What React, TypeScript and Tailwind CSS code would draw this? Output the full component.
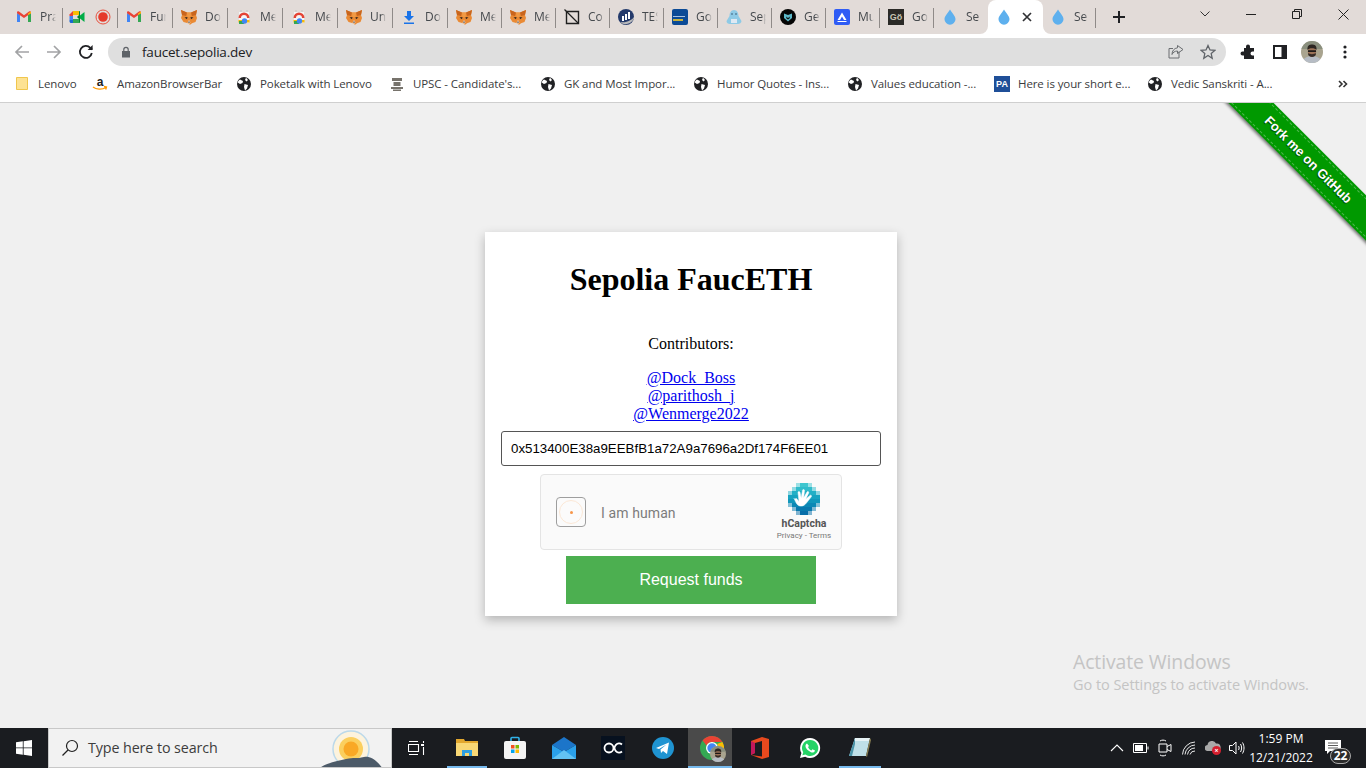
import React from "react";

const ui = { fontFamily: '"Open Sans", "Noto Sans", sans-serif' };

const Gmail = () => (
  <svg width="16" height="16" viewBox="0 0 16 16">
    <path d="M1 13V4l3 2v7z" fill="#4285f4" />
    <path d="M12 13V6l3-2v9z" fill="#34a853" />
    <path d="M1 4.200 8 9l7-4.800V3.500C15 2.500 14 2 13 2.600L8 6.300 3 2.600C2 2 1 2.500 1 3.500z" fill="#ea4335" />
    <path d="M12 6V4.400L15 2.600V4.200z" fill="#fbbc04" />
  </svg>
);
const Fox = () => (
  <svg width="16" height="16" viewBox="0 0 16 16">
    <path d="M0 1 6 3.500h4L16 1l-1 5 1 3-1.500 4-3.500 1.200-1.500 1.300h-1L7 14.200 2.500 13 0 9l1-3z" fill="#ea8a34" />
    <path d="M0 1 6 3.500 5 7 1 6zM16 1l-6 2.500L11 7l4-1z" fill="#c9651d" />
    <path d="M6 3.500h4L9.500 8h-3z" fill="#f09a45" />
    <path d="M3.500 8.500 6.500 8 6 10.200zM12.500 8.500 9.500 8 10 10.200z" fill="#33261c" />
    <path d="M6.500 13.500 8 11l1.500 2.500-1.500 1.500z" fill="#ead5c2" />
    <path d="M7 12.800h2L8 14z" fill="#2a1f18" />
  </svg>
);
const Meet = () => (
  <svg width="16" height="16" viewBox="0 0 16 16">
    <path d="M4 2h6v4H4z" fill="#fbbc04" />
    <path d="M4 2 .5 5.500V7H4z" fill="#ea4335" />
    <path d="M.5 7H4v4H.5z" fill="#4285f4" />
    <path d="M.5 11H4v3H2c-.800 0-1.500-.700-1.500-1.500z" fill="#1967d2" />
    <path d="M4 10h6v4H4z" fill="#34a853" />
    <path d="M10 2c.600 0 1 .400 1 1v10c0 .600-.400 1-1 1V10L8 8l2-2z" fill="#00832d" />
    <path d="M11 6.500 15.500 3v10L11 9.500z" fill="#00ac47" />
  </svg>
);
const Rec = () => (
  <svg width="16" height="16" viewBox="0 0 16 16">
    <circle cx="8" cy="8" r="7" fill="none" stroke="#e8513f" strokeWidth="1" />
    <circle cx="8" cy="8" r="4.800" fill="#e53a2b" />
  </svg>
);
const Rainbow = () => (
  <svg width="16" height="16" viewBox="0 0 16 16">
    <path d="M3 3h10v11H3z" fill="#f4f4f4" />
    <path d="M4.500 1h1v2h-1zM10.500 1h1v2h-1z" fill="#c4c4c4" />
    <path d="M2.500 9a5.500 5.500 0 0 1 11 0z" fill="#e44335" />
    <path d="M5 9a3 3 0 0 1 6 0z" fill="#f4f4f4" />
    <path d="M2.500 11h11v2.500h-11z" fill="#fbbc04" />
    <path d="M3 12h5v3H3z" fill="#34a853" />
    <circle cx="8.500" cy="12" r="2.700" fill="#4285f4" />
  </svg>
);
const Download = () => (
  <svg width="16" height="16" viewBox="0 0 16 16" fill="#1a73e8">
    <path d="M6 2h4v5h3l-5 5-5-5h3z" />
    <path d="M3 13.500h10V15H3z" />
  </svg>
);
const Co = () => (
  <svg width="16" height="16" viewBox="0 0 16 16" fill="none" stroke="#1f1f1f">
    <path d="M2.500 2.500h12v12h-12z" strokeWidth="1.400" />
    <path d="M.5.500 14.500 14.500" strokeWidth="1.200" />
  </svg>
);
const Tes = () => (
  <svg width="16" height="16" viewBox="0 0 16 16">
    <circle cx="8" cy="8" r="8" fill="#243a6b" />
    <path d="M2 13c4 3.500 10 3 14-3V8c-2 3-8 6.500-14 5z" fill="#b9b9bb" />
    <path d="M4 7h2v5H4zM7 5h2v6H7zM10 3h2v7h-2z" fill="#fff" />
  </svg>
);
const CryptoStore = () => (
  <div className="relative w-4 h-4 rounded-[2px] bg-[#0b4a96]">
    <div className="absolute left-[1px] top-[7px] w-[12px] h-[1px] bg-[#a7c1e0]" />
    <div className="absolute left-[1px] top-[10px] w-[10px] h-[2px] bg-[#c9b23c]" />
  </div>
);
const Seal = () => (
  <svg width="16" height="16" viewBox="0 0 16 16">
    <path d="M8 1c3 0 4.500 3 4.500 6l3 5c0 2-2 3-3.500 3H4c-2 0-3.500-1-3.500-3l3-5C3.500 4 5 1 8 1z" fill="#8ecae6" />
    <path d="M5 10h6v4H5z" fill="#dfe9f3" />
    <circle cx="6" cy="5" r=".8" fill="#35566f" />
    <circle cx="10" cy="5" r=".8" fill="#35566f" />
  </svg>
);
const Ge = () => (
  <svg width="16" height="16" viewBox="0 0 16 16">
    <circle cx="8" cy="8" r="8" fill="#050505" />
    <path d="M4 4.500 8 6l4-1.500V9l-4 3.500L4 9z" fill="#5cb8c9" />
    <path d="M6 7.500 8 9l2-1.500-.5 2L8 10.500l-1.500-1z" fill="#101010" />
  </svg>
);
const Mu = () => (
  <svg width="16" height="16" viewBox="0 0 16 16">
    <rect width="16" height="16" rx="2" fill="#2f5cf5" />
    <path d="M8 3.500 12.500 11H10L8 7.500 6 11H3.500z" fill="#fff" />
    <path d="M3.500 12h9v1h-9z" fill="#fff" />
  </svg>
);
const Go = () => (
  <div className="w-4 h-4 bg-[#2b2a27] text-[#c9c5b4] text-[9px] font-bold leading-4 text-center" style={{ fontFamily: '"Liberation Sans", sans-serif' }}>
    Gö
  </div>
);
const Drop = () => (
  <svg width="16" height="16" viewBox="0 0 16 16">
    <path d="M8 .5c2 3.500 5.500 6.500 5.500 9.800A5.500 5.500 0 0 1 8 15.700a5.500 5.500 0 0 1-5.500-5.400C2.500 7 6 4 8 .5z" fill="#5eb0ee" />
  </svg>
);
const Globe = () => (
  <svg width="16" height="16" viewBox="0 0 16 16">
    <circle cx="8" cy="8" r="7" fill="#202124" />
    <path d="M4 3.500 7 5 6.500 7 4 8 1.800 6.500C2 5.300 3 4.200 4 3.500zM8.500 8l3.500 1-1 3.500-2 2-1-3.500zM10 1.800 12 4l-1.500 1.500L9 4z" fill="#fff" />
  </svg>
);
const Chrome = ({ s = 16 }: { s?: number }) => (
  <svg width={s} height={s} viewBox="0 0 24 24">
    <circle cx="12" cy="12" r="12" fill="#34a853" />
    <path d="M12 0a12 12 0 0 1 10.400 6H12a6 6 0 0 0-5.500 3.500L2.600 4.500A12 12 0 0 1 12 0z" fill="#ea4335" />
    <path d="M22.400 6A12 12 0 0 1 12 24l5-8.500A6 6 0 0 0 17 8z" fill="#fbbc04" />
    <circle cx="12" cy="12" r="6" fill="#fff" />
    <circle cx="12" cy="12" r="4.700" fill="#4285f4" />
  </svg>
);

type Tab = { icons: React.ReactNode[]; label: string; w: number };
const tabs: Tab[] = [
  { icons: [<Gmail />], label: "Pra", w: 55 },
  { icons: [<Meet />, <Rec />], label: "", w: 55 },
  { icons: [<Gmail />], label: "Fur", w: 55 },
  { icons: [<Fox />], label: "Do", w: 55 },
  { icons: [<Rainbow />], label: "Me", w: 55 },
  { icons: [<Rainbow />], label: "Me", w: 55 },
  { icons: [<Fox />], label: "Un", w: 55 },
  { icons: [<Download />], label: "Do", w: 55 },
  { icons: [<Fox />], label: "Me", w: 54 },
  { icons: [<Fox />], label: "Me", w: 54 },
  { icons: [<Co />], label: "Co", w: 54 },
  { icons: [<Tes />], label: "TES", w: 54 },
  { icons: [<CryptoStore />], label: "Go", w: 54 },
  { icons: [<Seal />], label: "Sep", w: 54 },
  { icons: [<Ge />], label: "Ge", w: 54 },
  { icons: [<Mu />], label: "Mu", w: 54 },
  { icons: [<Go />], label: "Go", w: 54 },
  { icons: [<Drop />], label: "Se", w: 54 },
];

const TabStrip = () => (
  <div className="h-[34px] bg-[#e2dbd8] flex pl-2 shrink-0" style={ui}>
    {tabs.map((t, i) => (
      <div key={i} className={`h-[34px] flex items-center shrink-0 relative gap-[10px] text-[12px] text-[#45494d] ${i === 1 ? "pl-[6px]" : "pl-2"}`} style={{ width: t.w }}>
        {t.icons.map((ic, k) => (
          <div key={k} className="w-4 h-4 shrink-0">
            {ic}
          </div>
        ))}
        {t.label && <div className="w-[16px] overflow-hidden whitespace-nowrap -ml-[2px] [mask-image:linear-gradient(to_right,black_70%,transparent)]">{t.label}</div>}
        {i !== 17 && <div className="absolute right-0 top-[8px] w-px h-[20px] bg-[#8f8a88]" />}
      </div>
    ))}
    <div className="w-[55px] h-[34px] bg-white rounded-t-[8px] flex items-center pl-2 shrink-0 relative">
      <svg width="8" height="8" viewBox="0 0 8 8" className="absolute -left-[8px] bottom-0">
        <path d="M8 0v8H0a8 8 0 0 0 8-8z" fill="#fff" />
      </svg>
      <svg width="8" height="8" viewBox="0 0 8 8" className="absolute -right-[8px] bottom-0">
        <path d="M0 0v8h8a8 8 0 0 1-8-8z" fill="#fff" />
      </svg>
      <Drop />
      <svg width="16" height="16" viewBox="0 0 16 16" className="ml-[7px]" stroke="#303134" strokeWidth="1.700">
        <path d="M4 4l8 8M12 4l-8 8" />
      </svg>
    </div>
    <div className="w-[53px] h-[34px] flex items-center pl-[7px] gap-2 shrink-0 relative text-[12px] text-[#45494d]">
      <Drop />
      <div className="w-[15px] overflow-hidden whitespace-nowrap [mask-image:linear-gradient(to_right,black_70%,transparent)]">Se</div>
      <div className="absolute right-0 top-[8px] w-px h-[20px] bg-[#8f8a88]" />
    </div>
    <div className="w-[46px] flex items-center justify-center shrink-0">
      <svg width="14" height="14" viewBox="0 0 14 14" stroke="#202124" strokeWidth="2">
        <path d="M7 1v12M1 7h12" />
      </svg>
    </div>
    <div className="flex-1 flex items-start justify-end">
      <div className="w-[46px] h-[28px] flex items-center justify-center">
        <svg width="12" height="12" viewBox="0 0 12 12" fill="none" stroke="#333">
          <path d="M1.500 3.500 6 8l4.500-4.500" />
        </svg>
      </div>
      <div className="w-[46px] h-[28px] flex items-center justify-center">
        <svg width="10" height="10" viewBox="0 0 10 10" stroke="#222">
          <path d="M0 5.500h10" />
        </svg>
      </div>
      <div className="w-[46px] h-[28px] flex items-center justify-center">
        <svg width="10" height="10" viewBox="0 0 10 10" fill="none" stroke="#222">
          <path d="M.5 2.500h7v7h-7zM2.500 2.500v-2h7v7h-2" />
        </svg>
      </div>
      <div className="w-[46px] h-[28px] flex items-center justify-center">
        <svg width="11" height="11" viewBox="0 0 11 11" stroke="#222">
          <path d="M.5.500l10 10M10.500.500l-10 10" />
        </svg>
      </div>
    </div>
  </div>
);

const Avatar = ({ s = 22 }: { s?: number }) => (
  <svg width={s} height={s} viewBox="0 0 22 22">
    <clipPath id="av">
      <circle cx="11" cy="11" r="11" />
    </clipPath>
    <g clipPath="url(#av)">
      <rect width="22" height="22" fill="#a9a48f" />
      <path d="M0 0h22v8H0z" fill="#8a8f7e" />
      <path d="M1 22c1-5 5-7 10-7s9 2 10 7z" fill="#b6bcc4" />
      <ellipse cx="11" cy="10.500" rx="4.200" ry="5.200" fill="#9c7257" />
      <path d="M6.500 9C6 4.500 8.500 3.500 11 3.500S16 4.500 15.500 9c-1.500-2.500-7.500-2.500-9 0z" fill="#2d2622" />
      <path d="M7 9.200h8v1.800H7z" fill="#1d1a18" />
      <path d="M7.200 12c1.500 1.500 6 1.500 7.600 0v2c-1.500 2.500-6 2.500-7.600 0z" fill="#362c27" />
    </g>
  </svg>
);

const Toolbar = () => (
  <div className="h-[34px] bg-white flex items-center shrink-0 relative pt-[2px]" style={ui}>
    <div className="w-[108px] flex items-center pl-[14px] gap-4 shrink-0">
      <svg width="16" height="16" viewBox="0 0 16 16" fill="none" stroke="#a2a3a5" strokeWidth="1.700">
        <path d="M15 8H2M8 2 2 8l6 6" />
      </svg>
      <svg width="16" height="16" viewBox="0 0 16 16" fill="none" stroke="#a2a3a5" strokeWidth="1.700">
        <path d="M1 8h13M8 2l6 6-6 6" />
      </svg>
      <svg width="16" height="16" viewBox="0 0 16 16" fill="none" stroke="#202124" strokeWidth="1.800">
        <path d="M13.800 9a6 6 0 1 1-1.500-5.200L14 5.500" />
        <path d="M14.600 1v5h-5z" fill="#202124" stroke="none" />
      </svg>
    </div>
    <div className="w-[1118px] h-[28px] rounded-full bg-[#dfdfdf] flex items-center pl-[13px] shrink-0">
      <svg width="10" height="12" viewBox="0 0 10 12" fill="#5f6368">
        <path d="M1 5h8v6.500H1z" />
        <path d="M2.800 5V3.500a2.200 2.200 0 0 1 4.400 0V5" fill="none" stroke="#5f6368" strokeWidth="1.200" />
      </svg>
      <span className="ml-[11px] text-[13.500px] text-[#202124] tracking-[-0.2px]">faucet.sepolia.dev</span>
      <div className="ml-auto flex items-center gap-4 pr-[10px]">
        <svg width="16" height="16" viewBox="0 0 16 16" fill="none" stroke="#6a6d70" strokeWidth="1">
          <path d="M11 7.500V14H1V4.500h4" />
          <path d="M9.500 1.500 15 5.500l-5.500 4V7C6.500 7 5 8.500 4 10.500 4 7 6 4.200 9.500 3.800z" />
        </svg>
        <svg width="16" height="16" viewBox="0 0 16 16" fill="none" stroke="#5f6368" strokeWidth="1.300">
          <path d="m8 1.500 2 4.400 4.800.5-3.600 3.200 1 4.700L8 11.500l-4.200 2.800 1-4.700L1.200 6.400 6 5.900z" />
        </svg>
      </div>
    </div>
    <div className="flex items-center pl-[14px]">
      <svg width="16" height="16" viewBox="0 0 16 16" fill="#202124">
        <path d="M6 2.500a2 2 0 0 1 4 0V4h4v3.500h-1.500a2 2 0 0 0 0 4H14V15H4v-3.500H2.500a2 2 0 0 1 0-4H4V4h2z" />
      </svg>
      <svg width="14" height="14" viewBox="0 0 14 14" className="ml-[17px]">
        <path d="M0 0h14v14H0z" fill="#202124" />
        <path d="M2 2h6.500v10H2z" fill="#fff" />
      </svg>
      <div className="ml-[14px] flex">
        <Avatar />
      </div>
      <svg width="4" height="14" viewBox="0 0 4 14" fill="#202124" className="ml-[20px]">
        <circle cx="2" cy="2" r="1.600" />
        <circle cx="2" cy="7" r="1.600" />
        <circle cx="2" cy="12" r="1.600" />
      </svg>
    </div>
  </div>
);

const marks: { icon: React.ReactNode; label: string; w: number; t: number }[] = [
  {
    icon: (
      <svg width="12" height="14" viewBox="0 0 12 14">
        <path d="M.5.500h11v12H.5z" fill="#fde293" stroke="#f0c64d" />
      </svg>
    ),
    label: "Lenovo",
    w: 76,
    t: 22,
  },
  {
    icon: (
      <svg width="16" height="16" viewBox="0 0 16 16">
        <text x="8" y="9.500" textAnchor="middle" fontSize="12" fontWeight="700" fontFamily="Liberation Sans" fill="#222">a</text>
        <path d="M1 11c3 2.500 9 3 13 .5M12 10.500l2.500.5-.8 2.500" fill="none" stroke="#f90" strokeWidth="1.300" />
      </svg>
    ),
    label: "AmazonBrowserBar",
    w: 144,
    t: 25,
  },
  { icon: <Globe />, label: "Poketalk with Lenovo", w: 153, t: 24 },
  {
    icon: (
      <svg width="16" height="16" viewBox="0 0 16 16" fill="#77736c">
        <path d="M3 2h10v3H3zM4.500 6h7v4h-7zM2 11h12v2H2zM4 13.500h8V15H4z" />
      </svg>
    ),
    label: "UPSC - Candidate's...",
    w: 151,
    t: 24,
  },
  { icon: <Globe />, label: "GK and Most Impor...", w: 153, t: 24 },
  { icon: <Globe />, label: "Humor Quotes - Ins...", w: 154, t: 24 },
  { icon: <Globe />, label: "Values education -...", w: 147, t: 24 },
  {
    icon: (
      <div className="w-4 h-4 bg-[#1f4f98] text-white text-[9px] font-bold leading-4 text-center" style={{ fontFamily: '"Liberation Sans", sans-serif' }}>
        PA
      </div>
    ),
    label: "Here is your short e...",
    w: 153,
    t: 24,
  },
  { icon: <Globe />, label: "Vedic Sanskriti - A...", w: 150, t: 24 },
];

const Bookmarks = () => (
  <div className="h-[35px] bg-white border-b border-[#cfcfcf] flex items-center pl-[16px] pb-[2px] shrink-0 text-[11.500px] text-[#3a3b3d] relative" style={ui}>
    {marks.map((m, i) => (
      <div key={i} className="flex items-center shrink-0" style={{ width: m.w }}>
        <div className="w-4 flex justify-start shrink-0">{m.icon}</div>
        <span className="whitespace-nowrap tracking-[-0.1px]" style={{ marginLeft: m.t - 16 }}>
          {m.label}
        </span>
      </div>
    ))}
    <svg width="10" height="10" viewBox="0 0 10 10" fill="none" stroke="#333" strokeWidth="1.600" className="ml-[41px]">
      <path d="m1 2 3 3-3 3M5.500 2l3 3-3 3" />
    </svg>
  </div>
);

const hcSoft: [number, number, number][] = [
  [0, 2, 4],
  [1, 1, 6],
  [2, 0, 8],
  [3, 0, 8],
  [4, 0, 8],
  [5, 0, 8],
  [6, 1, 6],
  [7, 2, 4],
];
const hcRows: [number, number, string][] = [
  [3, 2, "#3ec6cf"],
  [2, 4, "#2fbccb"],
  [1, 6, "#22b0c6"],
  [0, 8, "#17a3c0"],
  [0, 8, "#1097bb"],
  [1, 6, "#0b88b5"],
  [2, 4, "#0779ae"],
  [3, 2, "#066da8"],
];

const HcLogo = () => (
  <svg width="32" height="32" viewBox="0 0 32 32">
    {hcSoft.map(([r, c, n]) => (
      <rect key={r} x={c * 4} y={r * 4} width={n * 4} height="4" fill={hcRows[r][2]} opacity="0.5" />
    ))}
    {hcRows.map(([c, n, f], i) => (
      <rect key={i} x={c * 4} y={i * 4} width={n * 4} height="4" fill={f} />
    ))}
    <path d="M7 16.500c0-.9 1.400-1.300 2-.4l2 2.400L10 9.500c-.1-1.200 1.700-1.500 2-.2l1.200 5.700L14.500 7.300c.2-1.200 2-1 2 .3l-.8 7.200 3.300-5.800c.7-1.100 2.200-.3 1.700.9l-3 6.300 4.300-3.800c.9-.8 2.100.4 1.300 1.400l-5.300 6.700c-2.200 3-6.500 3.500-9 .7-1.300-1.500-2-4-3-5.900z" fill="#fff" stroke="#fff" strokeWidth="0.500" />
  </svg>
);

const Hcaptcha = () => (
  <div className="w-[302px] h-[76px] bg-[#fafafa] border border-[#e4e4e4] rounded-[4px] flex items-center shrink-0" style={{ fontFamily: '"Roboto", sans-serif' }}>
    <div className="ml-[15px] w-[30px] h-[30px] bg-[#fbfbfb] border border-[#9e9e9e] rounded-[4px] flex items-center justify-center">
      <div className="w-[24px] h-[24px] rounded-full border border-[#fbe8d6] flex items-center justify-center">
        <div className="w-[3px] h-[3px] rounded-full bg-[#f7964a]" />
      </div>
    </div>
    <span className="ml-[15px] mt-[2px] text-[14px] text-[#7c7c7c] tracking-[0.1px]">I am human</span>
    <div className="ml-auto mr-[9px] w-[56px] flex flex-col items-center">
      <HcLogo />
      <span className="text-[10.500px] font-bold text-[#555] leading-[13px] mt-[2px] whitespace-nowrap">hCaptcha</span>
      <span className="text-[8px] text-[#777] leading-[12px] whitespace-nowrap">Privacy - Terms</span>
    </div>
  </div>
);

const Page = () => (
  <div className="flex-1 bg-[#f0f0f0] relative overflow-hidden flex flex-col items-start pl-[485px] pt-[129px]">
    <div className="w-[412px] h-[384px] bg-white shadow-[0_4px_10px_rgba(0,0,0,0.25)] flex flex-col items-center" style={{ fontFamily: '"Liberation Serif", serif' }}>
      <h1 className="text-[32px] font-bold text-black leading-[37px] mt-[29px]">Sepolia FaucETH</h1>
      <p className="text-[16px] text-black leading-[18px] mt-[37px]">Contributors:</p>
      <div className="flex flex-col items-center text-[16px] leading-[18px] text-[#0000ee] underline mt-[16px]">
        <a href="#">@Dock_Boss</a>
        <a href="#">@parithosh_j</a>
        <a href="#">@Wenmerge2022</a>
      </div>
      <div className="w-[380px] h-[35px] border border-[#555] rounded-[3px] flex items-center pl-[9px] mt-[8px] text-[13.300px] text-black whitespace-nowrap" style={{ fontFamily: '"Liberation Sans", sans-serif' }}>
        0x513400E38a9EEBfB1a72A9a7696a2Df174F6EE01
      </div>
      <div className="mt-[8px]">
        <Hcaptcha />
      </div>
      <button className="w-[250px] h-[48px] bg-[#4caf50] text-white text-[16px] mt-[6px] shrink-0" style={{ fontFamily: '"Liberation Sans", sans-serif' }}>
        Request funds
      </button>
    </div>

    <div className="absolute left-[1158px] top-[41px] w-[300px] h-[32px] bg-[#090] rotate-45 shadow-[0_2px_3px_rgba(0,0,0,0.5)] flex items-center justify-center">
      <div className="w-full h-[28px] border-y border-dashed border-[#4fb84f] flex items-center justify-center text-white text-[13px] font-bold [text-shadow:0_1px_1px_rgba(0,0,0,0.6)]" style={{ fontFamily: '"Liberation Sans", sans-serif' }}>
        Fork me on GitHub
      </div>
    </div>

    <div className="absolute left-[1073px] top-[546px] text-[#c4c4c4]" style={ui}>
      <div className="text-[19.400px] leading-[26px] tracking-[-0.1px]">Activate Windows</div>
      <div className="text-[14.500px] leading-[20px] tracking-[-0.05px]">Go to Settings to activate Windows.</div>
    </div>
  </div>
);

const Slot = ({ w, active, line, children }: { w: number; active?: boolean; line?: boolean; children: React.ReactNode }) => (
  <div className={`h-[40px] flex items-center justify-center relative shrink-0 ${active ? "bg-[#4a4a4a]" : ""}`} style={{ width: w }}>
    {children}
    {line && <div className="absolute bottom-0 left-[0px] right-[0px] h-[2px] bg-[#76b9ed]" />}
  </div>
);

const Tray = ({ children }: { children: React.ReactNode }) => <div className="w-[24px] flex items-center justify-center shrink-0">{children}</div>;

const Taskbar = () => (
  <div className="h-[40px] bg-[#1a1c20] flex items-center shrink-0 relative text-white" style={ui}>
    <div className="w-[48px] flex justify-center shrink-0">
      <svg width="16" height="16" viewBox="0 0 16 16" fill="#fff">
        <path d="M0 2.300 6.800 1.300V7.500H0zM7.600 1.200 16 0v7.500H7.600zM0 8.300h6.800v6.400L0 13.700zM7.600 8.300H16V16l-8.400-1.200z" />
      </svg>
    </div>
    <div className="w-[344px] h-[40px] bg-[#f2f2f2] border border-[#c8c8c8] flex items-center relative overflow-hidden shrink-0">
      <svg width="18" height="18" viewBox="0 0 18 18" fill="none" stroke="#202020" strokeWidth="1.200" className="ml-[12px]">
        <circle cx="11" cy="7" r="5.500" />
        <path d="M7 11 1.500 16.500" />
      </svg>
      <span className="ml-[9px] text-[14.300px] text-[#3d3d3d] tracking-[-0.1px]">Type here to search</span>
      <svg width="80" height="40" viewBox="0 0 80 40" className="absolute right-[0px] top-0">
        <circle cx="40" cy="20" r="18" fill="#fdf3dd" stroke="#bcd9ea" strokeWidth="1.500" />
        <circle cx="40" cy="20" r="12" fill="#fbcf5e" />
        <circle cx="40" cy="20" r="7.500" fill="#f9a825" />
        <path d="M7 40c10-7 20-8 28-10 8-2 10 0 18-2 6-1 12 2 19 12z" fill="#4c5a68" />
      </svg>
    </div>
    <div className="w-[48px] flex justify-center shrink-0">
      <svg width="17" height="16" viewBox="0 0 17 16" fill="none" stroke="#fff" strokeWidth="1.100">
        <path d="M.5 4.500h10v7H.5zM1 1.500h9M1 14.500h9M15.500 1v2M15.500 7v8" />
        <rect x="13" y="4" width="3" height="2" fill="#fff" stroke="none" />
      </svg>
    </div>
    <div className="w-[7px] shrink-0" />
    <Slot w={40} line>
      <svg width="22" height="20" viewBox="0 0 22 20">
        <path d="M0 1h8l1 2h13v4H0z" fill="#e2a72e" />
        <path d="M0 5h22v13H0z" fill="#f8d775" />
        <path d="M6 12h10v6H6z" fill="#2f9fe0" />
        <path d="M9 15h4v3H9z" fill="#f8d775" />
      </svg>
    </Slot>
    <div className="w-[7px] shrink-0" />
    <Slot w={42}>
      <svg width="24" height="24" viewBox="0 0 24 24">
        <path d="M8 5V2.500a1 1 0 0 1 1-1h6a1 1 0 0 1 1 1V5" fill="none" stroke="#31b3ea" strokeWidth="1.600" />
        <rect x="1" y="5" width="22" height="18" rx="2" fill="#f4f4f4" />
        <path d="M8 9h3.500v3.500H8z" fill="#f25022" />
        <path d="M12.500 9H16v3.500h-3.500z" fill="#7fba00" />
        <path d="M8 13.500h3.500V17H8z" fill="#00a4ef" />
        <path d="M12.500 13.500H16V17h-3.500z" fill="#ffb900" />
      </svg>
    </Slot>
    <div className="w-[7px] shrink-0" />
    <Slot w={42}>
      <svg width="24" height="22" viewBox="0 0 24 22">
        <path d="M0 8 12 0l12 8-12 7z" fill="#1c75c9" />
        <path d="M0 8l12 7 12-7v14H0z" fill="#2aa0ea" />
        <path d="M0 22 12 13l12 9z" fill="#63c3f3" />
      </svg>
    </Slot>
    <div className="w-[7px] shrink-0" />
    <Slot w={42}>
      <div className="w-6 h-6 bg-[#07111f] flex items-center justify-center">
        <svg width="20" height="12" viewBox="0 0 20 12" fill="none" stroke="#fff" strokeWidth="1.800">
          <circle cx="6" cy="6" r="4.500" />
          <path d="M19 2.500a4.500 4.500 0 1 0 0 7" />
        </svg>
      </div>
    </Slot>
    <div className="w-[7px] shrink-0" />
    <Slot w={44}>
      <svg width="22" height="22" viewBox="0 0 22 22">
        <circle cx="11" cy="11" r="11" fill="#1f94d2" />
        <path d="M4 11 17 5.500 15 17l-4-3-2 2-.5-3.500 6-5-7.500 4.500z" fill="#fff" />
      </svg>
    </Slot>
    <div className="w-[3px] shrink-0" />
    <Slot w={44} active line>
      <div className="relative w-6 h-6 ml-[3px]">
        <Chrome s={24} />
        <div className="absolute left-[10px] top-[10px] flex">
          <Avatar s={16} />
        </div>
      </div>
    </Slot>
    <div className="w-[7px] shrink-0" />
    <Slot w={42}>
      <svg width="18" height="22" viewBox="0 0 18 22">
        <path d="M0 4 11 0l7 2v18l-7 2-11-4 11 1.500V4L4 6v10l-4 2z" fill="#e8491e" />
        <path d="M0 4l4 2v10l-4 2z" fill="#c2185b" />
      </svg>
    </Slot>
    <div className="w-[8px] shrink-0" />
    <Slot w={42}>
      <svg width="22" height="22" viewBox="0 0 22 22">
        <path d="M11 1a10 10 0 0 0-8.600 15L1 21l5.200-1.300A10 10 0 1 0 11 1z" fill="#fff" />
        <path d="M11 3a8 8 0 0 0-6.800 12.200l-.8 3 3.100-.8A8 8 0 1 0 11 3z" fill="#25d366" />
        <path d="M8 6.500c-.5 0-1.500 1-1.500 2.500s1 3 2.800 4.500 3.700 2.300 4.700 2c1-.2 2-1.200 2-2l-2.500-1.300-1 1.200c-1.500-.5-3-2-3.500-3.500l1-1z" fill="#fff" />
      </svg>
    </Slot>
    <div className="w-[8px] shrink-0" />
    <Slot w={42} line>
      <svg width="24" height="24" viewBox="0 0 24 24">
        <path d="M7 2h15l-4 18H1z" fill="#bfe0e8" />
        <path d="M7 2h15l-1 3H6z" fill="#e7f3f6" />
        <path d="M1 20 7 2v6L4 20z" fill="#4a93a8" />
        <path d="M18 20l4-18 1 2-4 17z" fill="#8a8052" />
      </svg>
    </Slot>

    <div className="flex-1" />
    <div className="flex items-center shrink-0">
      <Tray>
        <svg width="14" height="8" viewBox="0 0 14 8" fill="none" stroke="#fff" strokeWidth="1.100">
          <path d="M1 7l6-6 6 6" />
        </svg>
      </Tray>
      <Tray>
        <svg width="16" height="10" viewBox="0 0 16 10" fill="none" stroke="#fff">
          <path d="M.5.500h13v9H.5z" />
          <path d="M2 2h8v6H2z" fill="#fff" stroke="none" />
          <path d="M15 3.500v3" />
        </svg>
      </Tray>
      <Tray>
        <svg width="14" height="18" viewBox="0 0 14 18" fill="none" stroke="#fff" strokeWidth="1">
          <path d="M1 5h8v8H1zM9 7.500l4-2v7l-4-2" />
          <path d="M2 2c2-1.200 4-1.200 6 0M2 16c2 1.200 4 1.200 6 0" />
        </svg>
      </Tray>
      <Tray>
        <svg width="14" height="14" viewBox="0 0 14 14" fill="none" stroke="#fff" strokeWidth=".9">
          <path d="M.5 13.500A13 13 0 0 1 13 1M3 13.500A10.500 10.500 0 0 1 13 4M5.500 13.500A8 8 0 0 1 13 7M8 13.500a5 5 0 0 1 5-3.500" />
        </svg>
      </Tray>
      <Tray>
        <div className="relative w-[16px] h-[14px]">
          <svg width="16" height="10" viewBox="0 0 16 10" fill="#a9a9a9" className="absolute top-0">
            <path d="M3 10a3 3 0 0 1-.5-6A4.500 4.500 0 0 1 11 2.500 3.800 3.800 0 0 1 12.500 10z" />
          </svg>
          <div className="absolute left-[7px] top-[5px] w-[9px] h-[9px] rounded-full bg-[#d5202f] text-[7px] leading-[9px] text-center font-bold text-white">×</div>
        </div>
      </Tray>
      <Tray>
        <svg width="16" height="14" viewBox="0 0 16 14" fill="none" stroke="#fff" strokeWidth="1">
          <path d="M.5 4.500h3L7 1v12L3.500 9.500h-3zM9.500 5c.800 1.200.800 2.800 0 4M11.500 3c1.500 2.500 1.500 5.500 0 8M13.500 1.500c2 3.500 2 7.500 0 11" />
        </svg>
      </Tray>
    </div>
    <div className="w-[64px] text-center text-[12px] leading-[19px] text-white shrink-0 -mt-[1px] whitespace-nowrap">
      <div>1:59 PM</div>
      <div>12/21/2022</div>
    </div>
    <div className="w-[53px] relative h-[40px] shrink-0">
      <div className="absolute left-[12px] top-[12px]">
        <svg width="16" height="14" viewBox="0 0 16 14">
          <path d="M0 0h16v11H5l-3 3v-3H0z" fill="#fff" />
          <path d="M3 3h10M3 5.500h10M3 8h10" stroke="#333" strokeWidth=".8" />
        </svg>
      </div>
      <div className="absolute left-[17px] top-[20px] w-[21px] h-[16px] rounded-full bg-[#2c2c2c] border border-[#aaa] text-[12px] font-bold leading-[14px] text-center text-white">22</div>
    </div>
  </div>
);

export default function App() {
  return (
    <div className="w-[1366px] h-screen flex flex-col overflow-hidden">
      <TabStrip />
      <Toolbar />
      <Bookmarks />
      <Page />
      <Taskbar />
    </div>
  );
}
